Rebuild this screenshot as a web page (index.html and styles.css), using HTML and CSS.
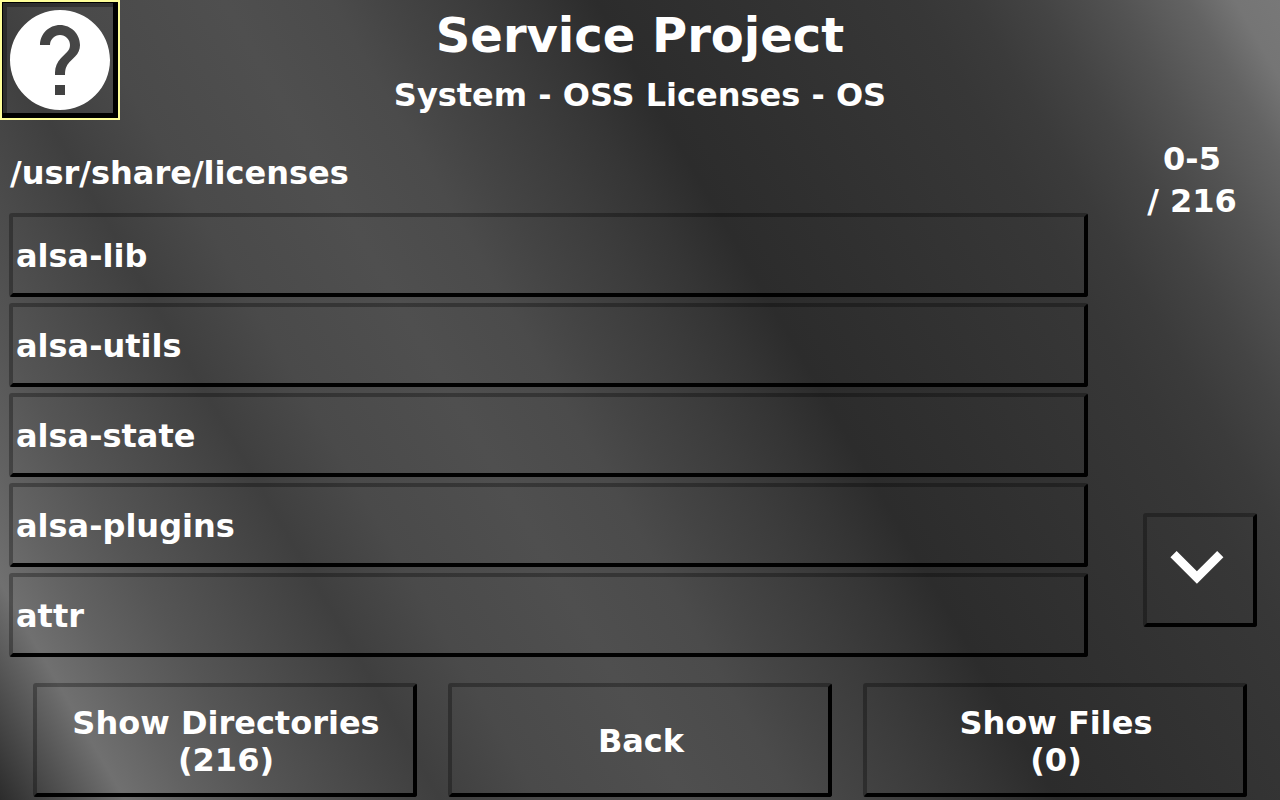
FILE: index.html
```html
<!DOCTYPE html>
<html lang="en">
<head>
    <meta charset="UTF-8">
    <meta name="viewport" content="width=device-width, initial-scale=1.0">
    <title>Service Project</title>
    <link rel="stylesheet" href="styles.css">
</head>
<body>
    <header class="header">
        <button class="help-btn" aria-label="Help">
            <svg viewBox="0 0 24 24"><path d="M12 2C6.48 2 2 6.48 2 12s4.48 10 10 10 10-4.48 10-10S17.52 2 12 2zm1 17h-2v-2h2v2zm2.07-7.75l-.9.92C13.45 12.9 13 13.5 13 15h-2v-.5c0-1.1.45-2.1 1.17-2.83l1.24-1.26c.37-.36.59-.86.59-1.41 0-1.1-.9-2-2-2s-2 .9-2 2H8c0-2.21 1.79-4 4-4s4 1.79 4 4c0 .88-.36 1.68-.93 2.25z"/></svg>
        </button>
        <div class="titles">
            <h1>Service Project</h1>
            <h2>System - OSS Licenses - OS</h2>
        </div>
    </header>

    <main class="content">
        <section class="browser">
            <p class="path">/usr/share/licenses</p>
            <ul class="list">
                <li><button class="btn">alsa-lib</button></li>
                <li><button class="btn">alsa-utils</button></li>
                <li><button class="btn">alsa-state</button></li>
                <li><button class="btn">alsa-plugins</button></li>
                <li><button class="btn">attr</button></li>
            </ul>
        </section>
        <aside class="pager">
            <p class="count">0-5<br>/ 216</p>
            <button class="btn down-btn" aria-label="Next page">
                <svg viewBox="0.7 0.9 24 24"><path d="M16.59 8.59L12 13.17 7.41 8.59 6 10l6 6 6-6z"/></svg>
            </button>
        </aside>
    </main>

    <footer class="footer">
        <button class="btn">Show Directories<br>(216)</button>
        <button class="btn">Back</button>
        <button class="btn">Show Files<br>(0)</button>
    </footer>
</body>
</html>
```
FILE: styles.css
```css
* {
    box-sizing: border-box;
}
body {
    margin: 0;
    min-height: 100vh;
    display: flex;
    flex-direction: column;
    font-family: "DejaVu Sans", sans-serif;
    font-size: 32px;
    font-weight: bold;
    line-height: 37px;
    color: white;
    /* brushed metal */
    background: #333 linear-gradient(60deg,
        #2c2c2c 0%,
        #707070 7.2%,
        #626262 11%,
        #555555 15.5%,
        #3f3f3f 25.3%,
        #4a4a4a 31%,
        #4f4f4f 39.4%,
        #4b4b4b 45.5%,
        #444444 49%,
        #3c3c3c 53.5%,
        #353535 57%,
        #2c2c2c 60.7%,
        #303030 67.5%,
        #373737 79%,
        #3b3b3b 82.3%,
        #444444 86.2%,
        #525252 90.5%,
        #636363 94.7%,
        #757575 97.4%,
        #787878 100%) no-repeat;
}
h1, h2, p, ul {
    margin: 0;
    padding: 0;
}
button {
    padding: 0;
    font: inherit;
    color: inherit;
    background: none;
    cursor: pointer;
}
svg {
    display: block;
    fill: white;
}
.header {
    display: grid;
    grid-template-columns: 120px 1fr 120px;
    height: 120px;
}
.help-btn {
    height: 120px;
    border: 2px solid #ffff99;
    box-shadow: inset 0 0 0 1px #000, inset -5px -5px 0 #000, inset 5px 5px 0 rgba(0, 0, 0, 0.3);
}
.help-btn svg {
    margin: -2px;
    width: 120px;
    height: 120px;
}
.titles {
    padding-top: 7px;
    text-align: center;
}
h1 {
    font-size: 48px;
    line-height: 56px;
    margin-bottom: 14px;
}
h2 {
    font-size: 32px;
    line-height: 37px;
}
.content {
    display: flex;
}
.browser {
    flex: 1;
    margin-left: 9px;
}
.path {
    padding: 35px 0 21px 1px;
}
.list {
    display: flex;
    flex-direction: column;
    gap: 6px;
    list-style: none;
}
.btn {
    padding: 3px 0 0 2px;
    border: 4px solid;
    border-color: rgba(0, 0, 0, 0.3) #000 #000 rgba(0, 0, 0, 0.3);
    border-radius: 3px;
}
.list .btn {
    display: block;
    width: 100%;
    height: 84px;
    padding: 2px 3px 0;
    text-align: left;
}
.pager {
    display: flex;
    flex-direction: column;
    justify-content: space-between;
    align-items: center;
    width: 176px;
    margin-left: 16px;
    padding: 18px 0 30px;
}
.count {
    line-height: 42px;
    text-align: center;
}
.down-btn {
    width: 114px;
    height: 114px;
    margin-left: 16px;
    padding: 0;
}
.footer {
    display: grid;
    grid-template-columns: repeat(3, 1fr);
    gap: 31px;
    padding: 26px 33px 3px;
}
.footer .btn {
    height: 114px;
}
```
